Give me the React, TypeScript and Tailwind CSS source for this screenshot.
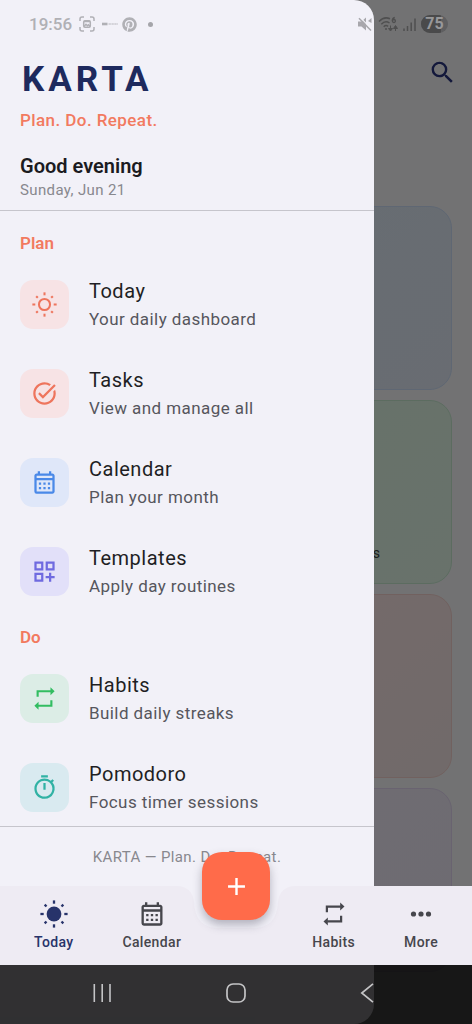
import type { ReactNode } from 'react';
import { clsx } from 'clsx';
import {
  MdAdd,
  MdOutlineCalendarMonth,
  MdOutlineDashboardCustomize,
  MdOutlineTimer,
  MdSearch,
  MdTaskAlt,
} from 'react-icons/md';
import { FaPinterest } from 'react-icons/fa';

interface IconProps {
  className?: string;
}

function SunIcon({ className, filled }: IconProps & { filled?: boolean }) {
  return (
    <svg viewBox="0 0 28 28" className={className} fill="none" stroke="currentColor" strokeWidth="2.3">
      {filled ? (
        <circle cx="14" cy="14" r="7.4" fill="currentColor" stroke="none" />
      ) : (
        <circle cx="14" cy="14" r="6.2" />
      )}
      {[0, 45, 90, 135, 180, 225, 270, 315].map((angle) => (
        <path key={angle} d={angle % 90 ? 'M14 3.4v-2.6' : 'M14 3.7V.4'} transform={`rotate(${angle} 14 14)`} />
      ))}
    </svg>
  );
}

function RepeatIcon({ className }: IconProps) {
  return (
    <svg viewBox="0 0 24 24" className={className}>
      <path
        d="M5.9 10.4V5.6H17.8M18.1 13.6v4.8H6.2"
        fill="none"
        stroke="currentColor"
        strokeWidth="1.9"
      />
      <path d="M17.3 2.1 21 5.6l-3.7 3.5zM6.7 14.9 3 18.4l3.7 3.5z" fill="currentColor" />
    </svg>
  );
}

function MoreIcon({ className }: IconProps) {
  return (
    <svg viewBox="0 0 28 28" className={className} fill="currentColor">
      <circle cx="6.5" cy="14" r="2.6" />
      <circle cx="14" cy="14" r="2.6" />
      <circle cx="21.5" cy="14" r="2.6" />
    </svg>
  );
}

interface MenuEntry {
  title: string;
  subtitle: string;
  tile: string;
  icon: ReactNode;
}

const sections: { label: string; entries: MenuEntry[] }[] = [
  {
    label: 'Plan',
    entries: [
      {
        title: 'Today',
        subtitle: 'Your daily dashboard',
        tile: 'bg-[#f7e3e5] text-[#ee755d]',
        icon: <SunIcon className="size-[25px]" />,
      },
      {
        title: 'Tasks',
        subtitle: 'View and manage all',
        tile: 'bg-[#f7e3e5] text-[#ee755d]',
        icon: <MdTaskAlt className="size-[27px]" />,
      },
      {
        title: 'Calendar',
        subtitle: 'Plan your month',
        tile: 'bg-[#dfe7f9] text-[#4a89e8]',
        icon: <MdOutlineCalendarMonth className="size-[27px]" />,
      },
      {
        title: 'Templates',
        subtitle: 'Apply day routines',
        tile: 'bg-[#e2e0f9] text-[#6f6ae0]',
        icon: <MdOutlineDashboardCustomize className="size-[27px]" />,
      },
    ],
  },
  {
    label: 'Do',
    entries: [
      {
        title: 'Habits',
        subtitle: 'Build daily streaks',
        tile: 'bg-[#dcede6] text-[#32bd61]',
        icon: <RepeatIcon className="size-[27px]" />,
      },
      {
        title: 'Pomodoro',
        subtitle: 'Focus timer sessions',
        tile: 'bg-[#d9eaf0] text-[#31b2a4]',
        icon: <MdOutlineTimer className="size-[27px]" />,
      },
    ],
  },
];

const cards = [
  { tone: 'border-[#cfe0fa] from-[#e0edfa] to-[#e4ecf8]', text: '' },
  { tone: 'border-[#c8ecd2] from-[#e0f8e6] to-[#e4f8ea]', text: 's' },
  { tone: 'border-[#f6d3d0] from-[#ffe6e6] to-[#f6e8e6]', text: '' },
  { tone: 'border-[#e4d8f4] from-[#f2ecfa] to-[#efeaf7]', text: '' },
];

function Dashboard() {
  return (
    <main className="absolute inset-0 overflow-hidden bg-[#f8f9fa]">
      <div className="flex justify-end px-[15px] pt-[58px]">
        <button type="button" aria-label="Search" className="text-[#2a3580]">
          <MdSearch className="size-[29px]" />
        </button>
      </div>
      <div className="mt-[119px] flex flex-col gap-[10px] pr-5 pl-[51%]">
        {cards.map((card, i) => (
          <div
            key={i}
            className={clsx(
              'flex h-[184px] shrink-0 items-end justify-end rounded-[22px] border bg-linear-to-br pr-[71px] pb-[18px] text-[14px] leading-6 text-[#3c4540]',
              card.tone
            )}
          >
            {card.text}
          </div>
        ))}
      </div>
      <div className="absolute inset-0 bg-black/54" />
    </main>
  );
}

function Drawer() {
  return (
    <aside className="absolute inset-y-0 left-0 flex w-[374px] max-w-[85%] flex-col overflow-hidden rounded-r-[20px] bg-[#f2f1f8]">
      <header className="border-b border-[#c6c5cc] px-5 pt-[58px] pb-2">
        <h1 className="pl-0.5 text-[35px] leading-[44px] font-bold tracking-[4px] text-[#1e2a5e]">KARTA</h1>
        <p className="mt-2 text-[17px] leading-5 font-medium tracking-wide text-[#f27a60]">
          Plan. Do. Repeat.
        </p>
        <p className="mt-6 text-[20px] leading-6 font-semibold text-[#1b1b1f]">Good evening</p>
        <p className="text-[15px] leading-6 tracking-wide text-[#88888e]">Sunday, Jun 21</p>
      </header>

      <nav className="min-h-0 flex-1 overflow-hidden pt-[11px]">
        {sections.map((section) => (
          <section key={section.label}>
            <h2 className="px-5 pt-[9px] pb-[5px] text-[17px] leading-6 font-semibold text-[#f27a60]">
              {section.label}
            </h2>
            <ul>
              {section.entries.map((entry) => (
                <li key={entry.title}>
                  <a href="#" className="flex h-[89px] items-center gap-5 px-5">
                    <span className={clsx('flex size-[49px] items-center justify-center rounded-[13px]', entry.tile)}>
                      {entry.icon}
                    </span>
                    <span className="flex flex-col">
                      <span className="text-[20px] leading-7 tracking-wide text-[#1f1f24]">{entry.title}</span>
                      <span className="text-[17px] leading-7 tracking-wide text-[#56565d]">{entry.subtitle}</span>
                    </span>
                  </a>
                </li>
              ))}
            </ul>
          </section>
        ))}
      </nav>

      <footer className="h-[198px] shrink-0 border-t border-[#c6c5cc] pt-5 text-center text-[15px] leading-5 tracking-wide text-[#88888e]">
        KARTA — Plan. Do. Repeat.
      </footer>
    </aside>
  );
}

function StatusBar() {
  return (
    <div className="absolute inset-x-0 top-0 flex h-12 items-center justify-between pr-6 pl-[29px]">
      <div className="flex items-center gap-[7px] text-[#b0b0b5]">
        <span className="text-[17px] leading-6 font-medium">19:56</span>
        <svg viewBox="0 0 16 16" className="size-4" fill="none" stroke="currentColor" strokeWidth="1.5">
          <path d="M1 5V3a2 2 0 0 1 2-2h2M11 1h2a2 2 0 0 1 2 2v2M15 11v2a2 2 0 0 1-2 2h-2M5 15H3a2 2 0 0 1-2-2v-2" />
          <rect x="4.7" y="4.7" width="6.6" height="6.6" rx="1.2" />
          <path d="M5 5.4h6M5 10.5l2-2.2 1.4 1.4 1-.9 1.8 1.7" />
        </svg>
        <div className="flex items-center gap-[4px]">
          <svg viewBox="0 0 16 6" className="h-[6px] w-4" fill="none" stroke="currentColor">
            <path d="M0 3h5.500" strokeWidth="2.600" />
            <path d="M6.500 3h9.500" strokeWidth="1.600" strokeDasharray="2.400 .5" opacity=".6" />
          </svg>
          <FaPinterest className="size-[15px]" />
        </div>
        <span className="ml-[4px] size-[5px] rounded-full bg-[#a5a5aa]" />
      </div>

      <div className="flex items-center gap-[5px] text-black">
        <svg viewBox="0 0 16 16" className="size-4 opacity-30">
          <path d="M1 5.500h3.500l4.500-4v13l-4.500-4H1z" fill="currentColor" />
          <path d="m11 5 3.500-3v5z" fill="currentColor" />
          <path d="m3.200 1.400 11.500 12" stroke="#ffffff" strokeWidth="1.200" />
          <path d="m2 2.300 12 12.200" stroke="currentColor" strokeWidth="1.500" />
        </svg>
        <svg viewBox="0 0 20 16" className="h-4 w-5 opacity-30" fill="none" stroke="currentColor" strokeWidth="1.500">
          <path d="M1 5.500C4.500 1.800 9 1.400 12 2.800M3.300 8.200c2.400-2.500 5.700-2.900 8.200-1.200M5.700 10.800c1.300-1.300 3-1.500 4.400-.5" />
          <circle cx="8" cy="13" r="1" fill="currentColor" stroke="none" />
          <path d="M16.800 1.500c-2 .5-2.500 1.800-2.500 3.200" strokeWidth="1.300" />
          <circle cx="15.900" cy="5" r="1.500" strokeWidth="1.300" />
          <path d="m10.500 12.500 2 2.500 2-2.500zM15.500 12.500l2-3 2 3zM12.500 9.500v4M17.500 11v4" fill="currentColor" strokeWidth="1" />
        </svg>
        <svg viewBox="0 0 13 14" className="h-[14px] w-[13px] opacity-30" stroke="currentColor" strokeWidth="1.500">
          <path d="M1 11.500V14M4.500 9V14M8.200 5.500V14M12 1.500V14" />
        </svg>
        <span className="relative flex h-[18px] w-[27px] items-center justify-center overflow-hidden rounded-full bg-[#5f5f61] text-[16px] leading-[18px] font-bold text-[#98989a]">
          <span className="absolute inset-y-0 left-0 w-3/4 bg-[#4a4a4b]" />
          <span className="relative">75</span>
        </span>
      </div>
    </div>
  );
}

const tabItem = 'flex flex-col items-center gap-[4px] text-[14px] leading-5 font-medium tracking-wide';

function BottomBar() {
  return (
    <nav className="relative h-[79px] text-[#46464c]">
      <div className="absolute inset-0 flex text-[#eeebf3]">
        <div className="flex-1 bg-current" />
        <svg viewBox="0 0 120 79" className="h-full w-[120px]" fill="currentColor">
          <path d="M0 0C11 0 17 6 18 16C19 34 28 42 42 42H78C92 42 101 34 102 16C103 6 109 0 120 0V79H0Z" />
        </svg>
        <div className="flex-1 bg-current" />
      </div>

      <div className="relative flex justify-between px-[34px] pt-[14px]">
        <div className="flex gap-[49px]">
          <button type="button" className={clsx(tabItem, 'text-[#27336a]')}>
            <SunIcon filled className="size-7" />
            Today
          </button>
          <button type="button" className={tabItem}>
            <MdOutlineCalendarMonth className="size-7" />
            Calendar
          </button>
        </div>
        <div className="flex gap-[49px]">
          <button type="button" className={tabItem}>
            <RepeatIcon className="size-7" />
            Habits
          </button>
          <button type="button" className={tabItem}>
            <MoreIcon className="size-7" />
            More
          </button>
        </div>
      </div>

      <button
        type="button"
        aria-label="Add"
        className="absolute -top-[34px] left-1/2 flex size-[68px] -translate-x-1/2 items-center justify-center rounded-[20px] bg-[#ff6b4a] text-white shadow-[0_5px_10px_rgba(60,60,80,0.35)]"
      >
        <MdAdd className="size-[29px]" />
      </button>
    </nav>
  );
}

function SystemBar() {
  return (
    <div className="flex h-[59px] items-center justify-between bg-black/80 px-[92px] pb-[3px] text-[#c4c4c6]">
      <button type="button" aria-label="Recent apps">
        <svg viewBox="0 0 20 20" className="size-5" stroke="currentColor" strokeWidth="1.600">
          <path d="M2.300 1v18M10.200 1v18M18 1v18" />
        </svg>
      </button>
      <button type="button" aria-label="Home">
        <svg viewBox="0 0 20 20" className="size-5" fill="none" stroke="currentColor" strokeWidth="1.700">
          <rect x="1" y="1" width="18" height="18" rx="6" />
        </svg>
      </button>
      <button type="button" aria-label="Back">
        <svg viewBox="0 0 20 20" className="size-5" fill="none" stroke="currentColor" strokeWidth="1.700">
          <path d="M13 .8 1.800 10 13 19.200" />
        </svg>
      </button>
    </div>
  );
}

export default function App() {
  return (
    <div className="relative flex min-h-screen flex-col justify-end overflow-hidden font-[Roboto,sans-serif]">
      <Dashboard />
      <Drawer />
      <StatusBar />
      <div className="relative">
        <BottomBar />
        <SystemBar />
      </div>
    </div>
  );
}
